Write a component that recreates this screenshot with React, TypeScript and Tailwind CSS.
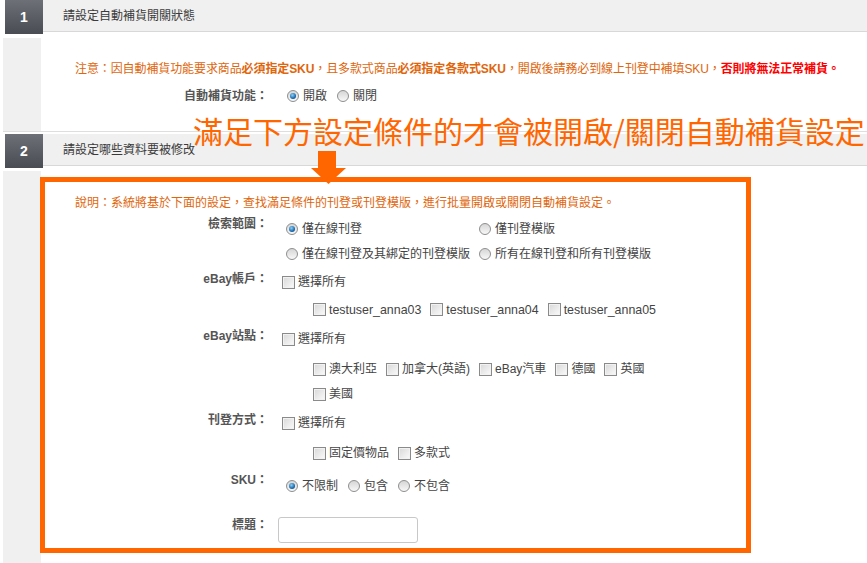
import type { FC, ReactNode } from 'react';

const Radio: FC<{ checked?: boolean }> = ({ checked }) => (
    <span className="ml-[4px] flex h-[12px] w-[12px] shrink-0 items-center justify-center rounded-full border border-[#8e8e8e] bg-linear-to-b from-[#d6d6d6] to-[#f8f8f8]">
        {checked && (
            <span className="h-[6px] w-[6px] rounded-full bg-[radial-gradient(circle_at_40%_35%,#8fd0f5,#1a6bb0_60%,#0c3a66)]" />
        )}
    </span>
);

const Checkbox: FC = () => (
    <span className="h-[13px] w-[13px] shrink-0 border border-[#8a8a8a] bg-linear-to-br from-[#d8d8d8] to-[#fbfbfb] shadow-[inset_0_0_0_1px_#f2f2f2]" />
);

const RadioItem: FC<{ label: string; checked?: boolean; className?: string }> = ({ label, checked, className = '' }) => (
    <span className={`flex items-center ${className}`}>
        <Radio checked={checked} />
        <span className="ml-[4px]">{label}</span>
    </span>
);

const CheckItem: FC<{ children: ReactNode; className?: string }> = ({ children, className = '' }) => (
    <span className={`flex items-center ${className}`}>
        <Checkbox />
        <span className="ml-[3px]">{children}</span>
    </span>
);

const SectionHeader: FC<{ num: string; title: string }> = ({ num, title }) => (
    <div className="flex h-[34px]">
        <div className="ml-[5px] flex h-[34px] w-[38px] shrink-0 items-center justify-center bg-linear-to-b from-[#6e7078] to-[#4a4c54] text-[14px] font-bold text-white">
            {num}
        </div>
        <div className="flex h-[32px] flex-1 items-center border-b border-[#d8d8d8] bg-[#f0f0f0] pl-[20px] text-[12px] text-[#3a3a3a]">
            {title}
        </div>
    </div>
);

const Label: FC<{ children: ReactNode; width?: string }> = ({ children, width = 'w-[223px]' }) => (
    <div className={`${width} shrink-0 text-right font-bold leading-[17px] text-[#555]`}>{children}</div>
);

export default function App() {
    return (
        <div className="relative h-[563px] w-[867px] overflow-hidden bg-white font-['Liberation_Sans','Noto_Sans_CJK_TC',sans-serif] text-[12px] text-[#444]">
            {/* Section 1 */}
            <SectionHeader num="1" title="請設定自動補貨開關狀態" />
            <div className="ml-[3px] mt-[4px] flex h-[94px] border-b border-[#dedede]">
                <div className="w-[38px] shrink-0 bg-[#f0f0f0]" />
                <div className="flex-1 pt-[23px]">
                    <p className="pl-[34px] leading-[17px] tracking-[-0.1px] text-[#e0660c]">
                        注意：因自動補貨功能要求商品<b>必須指定SKU</b>，且多款式商品<b>必須指定各款式SKU</b>，開啟後請務必到線上刊登中補填SKU，
                        <b className="text-[#ff0000]">否則將無法正常補貨。</b>
                    </p>
                    <div className="mt-[8px] flex h-[20px] items-center">
                        <Label width="w-[227px]">自動補貨功能：</Label>
                        <div className="ml-[15px] flex items-center">
                            <RadioItem label="開啟" checked />
                            <RadioItem label="關閉" className="ml-[6px]" />
                        </div>
                    </div>
                </div>
            </div>

            {/* Section 2 */}
            <div className="mt-[2px]">
                <SectionHeader num="2" title="請設定哪些資料要被修改" />
            </div>
            <div className="ml-[3px] mt-[3px] flex h-[400px]">
                <div className="w-[38px] shrink-0 bg-[#f0f0f0]" />
                <div className="-ml-px mt-[6px] h-[376px] w-[711px] shrink-0 border-[5px] border-[#ff6600] pt-[13px]">
                    <p className="pl-[30px] leading-[17px] text-[#e0660c]">
                        說明：系統將基於下面的設定，查找滿足條件的刊登或刊登模版，進行批量開啟或關閉自動補貨設定。
                    </p>

                    {/* 檢索範圍 */}
                    <div className="mt-[4px] flex items-start">
                        <Label>檢索範圍：</Label>
                        <div className="ml-[14px] grid grid-cols-[193px_auto]">
                            <div className="flex h-[25px] items-center"><RadioItem label="僅在線刊登" checked /></div>
                            <div className="flex h-[25px] items-center"><RadioItem label="僅刊登模版" /></div>
                            <div className="flex h-[25px] items-center"><RadioItem label="僅在線刊登及其綁定的刊登模版" /></div>
                            <div className="flex h-[25px] items-center"><RadioItem label="所有在線刊登和所有刊登模版" /></div>
                        </div>
                    </div>

                    {/* eBay帳戶 */}
                    <div className="mt-[5px] flex items-start">
                        <Label>eBay帳戶：</Label>
                        <div className="ml-[14px]">
                            <div className="flex h-[22px] items-center"><CheckItem>選擇所有</CheckItem></div>
                            <div className="mt-[6px] flex h-[22px] items-center pl-[31px] text-[12.4px]">
                                <CheckItem>testuser_anna03</CheckItem>
                                <CheckItem className="ml-[9px]">testuser_anna04</CheckItem>
                                <CheckItem className="ml-[9px]">testuser_anna05</CheckItem>
                            </div>
                        </div>
                    </div>

                    {/* eBay站點 */}
                    <div className="mt-[7px] flex items-start">
                        <Label>eBay站點：</Label>
                        <div className="ml-[14px]">
                            <div className="flex h-[22px] items-center"><CheckItem>選擇所有</CheckItem></div>
                            <div className="mt-[8px] flex h-[22px] items-center pl-[31px]">
                                <CheckItem>澳大利亞</CheckItem>
                                <CheckItem className="ml-[9px]">加拿大(英語)</CheckItem>
                                <CheckItem className="ml-[9px]">eBay汽車</CheckItem>
                                <CheckItem className="ml-[9px]">德國</CheckItem>
                                <CheckItem className="ml-[9px]">英國</CheckItem>
                            </div>
                            <div className="mt-[3px] flex h-[22px] items-center pl-[31px]">
                                <CheckItem>美國</CheckItem>
                            </div>
                        </div>
                    </div>

                    {/* 刊登方式 */}
                    <div className="mt-[7px] flex items-start">
                        <Label>刊登方式：</Label>
                        <div className="ml-[14px]">
                            <div className="flex h-[22px] items-center"><CheckItem>選擇所有</CheckItem></div>
                            <div className="mt-[8px] flex h-[22px] items-center pl-[31px]">
                                <CheckItem>固定價物品</CheckItem>
                                <CheckItem className="ml-[9px]">多款式</CheckItem>
                            </div>
                        </div>
                    </div>

                    {/* SKU */}
                    <div className="mt-[8px] flex items-start">
                        <Label>SKU：</Label>
                        <div className="ml-[14px] flex h-[27px] items-center">
                            <RadioItem label="不限制" checked />
                            <RadioItem label="包含" className="ml-[6px]" />
                            <RadioItem label="不包含" className="ml-[6px]" />
                        </div>
                    </div>

                    {/* 標題 */}
                    <div className="mt-[18px] flex items-start">
                        <Label>標題：</Label>
                        <input
                            type="text"
                            className="ml-[10px] h-[26px] w-[140px] rounded-[3px] border border-[#c8c8c8] bg-white px-[4px] outline-none"
                        />
                    </div>
                </div>
            </div>

            {/* Annotation overlay */}
            <div className="absolute left-[193px] top-[115px] whitespace-nowrap font-['Noto_Sans_CJK_TC',sans-serif] text-[30px] leading-none text-[#ff6600]">
                滿足下方設定條件的才會被開啟/關閉自動補貨設定
            </div>
            <svg className="absolute left-[311px] top-[151px]" width="35" height="33" viewBox="0 0 35 33">
                <polygon points="7,0 25,0 25,17 35,17 17.5,33 0,17 7,17" fill="#ff6600" />
            </svg>
        </div>
    );
}
